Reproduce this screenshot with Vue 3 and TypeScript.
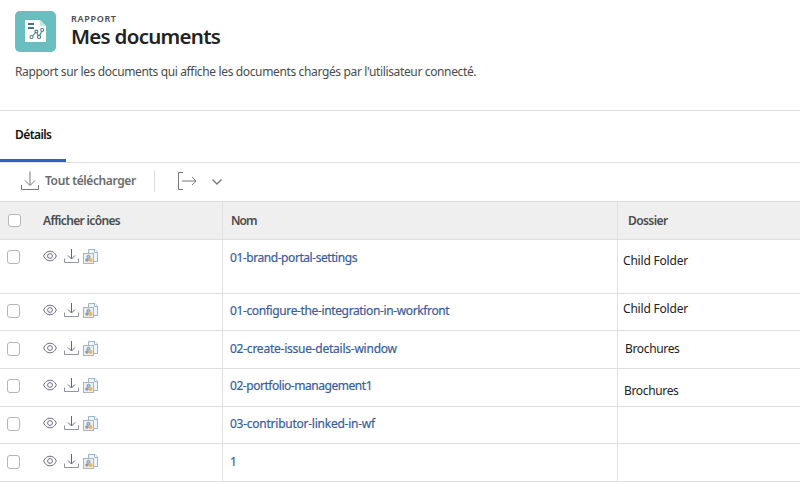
<script setup lang="ts">
interface DocumentRow {
  name: string
  nameY: number
  spacing: number
  folder: string
  folderX: number
  folderY: number
  folderSpacing: number
  height: number
  top: number
}

const rows: DocumentRow[] = [
  { name: '01-brand-portal-settings', nameY: 10, spacing: -0.44, folder: 'Child Folder', folderX: 5, folderY: 13, folderSpacing: -0.2, height: 54, top: 10 },
  { name: '01-configure-the-integration-in-workfront', nameY: 9, spacing: -0.37, folder: 'Child Folder', folderX: 5, folderY: 7, folderSpacing: -0.2, height: 37, top: 10 },
  { name: '02-create-issue-details-window', nameY: 10, spacing: -0.24, folder: 'Brochures', folderX: 7, folderY: 10, folderSpacing: -0.35, height: 38, top: 11 },
  { name: '02-portfolio-management1', nameY: 9, spacing: -0.46, folder: 'Brochures', folderX: 6, folderY: 14, folderSpacing: -0.35, height: 38, top: 10 },
  { name: '03-contributor-linked-in-wf', nameY: 9, spacing: -0.25, folder: '', folderX: 5, folderY: 10, folderSpacing: 0, height: 37, top: 10 },
  { name: '1', nameY: 10, spacing: 0, folder: '', folderX: 5, folderY: 10, folderSpacing: 0, height: 38, top: 11 },
]
</script>

<template>
  <div class="page">
    <header class="head">
      <div class="identity">
        <svg class="logo" width="41" height="41" viewBox="0 0 41 41">
          <rect width="41" height="41" rx="5" fill="#69bfbf" />
          <path d="M10 9H25L31 15V31H10Z" fill="#fff" />
          <path d="M25 9V15H31Z" fill="#c3e5e5" />
          <path d="M13 13H19M13 17H19" stroke="#43777d" stroke-width="2" />
          <g fill="#fff" stroke="#4c8389" stroke-width="1.1">
            <path d="M16.7 26L21.3 20.5L24 26L27 19.5" fill="none" />
            <circle cx="16.5" cy="26" r="1.5" />
            <circle cx="21.3" cy="20.5" r="1.4" />
            <circle cx="24" cy="26" r="1.6" />
            <circle cx="27.2" cy="19" r="1.5" />
          </g>
        </svg>
        <div>
          <div class="kind">RAPPORT</div>
          <h1>Mes documents</h1>
        </div>
      </div>
      <p class="description">Rapport sur les documents qui affiche les documents chargés par l'utilisateur connecté.</p>
    </header>

    <nav class="tabs"><a class="tab">Détails</a></nav>

    <div class="toolbar">
      <svg class="download-all" width="20" height="20" viewBox="0 0 20 20">
        <path d="M10 .5V14M5 9.5L10 14.5L15 9.5M1.5 14V18.5H18.5V14" />
      </svg>
      <span class="download-label">Tout télécharger</span>
      <i class="separator"></i>
      <svg class="export" width="20" height="20" viewBox="0 0 20 20">
        <path d="M6 1.5H1.5V18.5H6M5 10H18.5M15 6L19 10L15 14" />
      </svg>
      <svg class="chevron" width="12" height="8" viewBox="0 0 12 8">
        <path d="M1.5 1.5L6 6L10.5 1.5" />
      </svg>
    </div>

    <main>
      <div class="row header-row">
        <div class="cell actions"><i class="checkbox"></i><b class="icons-title">Afficher icônes</b></div>
        <div class="cell name"><b class="name-title">Nom</b></div>
        <div class="folder"><b class="folder-title">Dossier</b></div>
      </div>
      <div
        v-for="row in rows"
        :key="row.name"
        class="row"
        :style="{ '--height': row.height + 'px', '--top': row.top + 'px' }"
      >
        <div class="cell actions">
          <i class="checkbox"></i>
          <svg class="eye" width="14" height="12" viewBox="0 0 14 12">
            <path d="M.6 6C2.1 2.8 4.2 1.2 7 1.2S11.9 2.8 13.4 6C11.9 9.2 9.8 10.8 7 10.8S2.1 9.2.6 6Z" />
            <circle cx="7" cy="6" r="2.4" />
          </svg>
          <svg class="download" width="16" height="14" viewBox="0 0 16 14">
            <path class="arrow" d="M7.5 0V9.5M4 6.5L7.5 10L11 6.5" />
            <path class="tray" d="M.5 9.5V13.5H14.5V9.5" />
          </svg>
          <svg class="file" width="16" height="15" viewBox="0 0 16 15">
            <path d="M5.5.5H12L14.5 3V12.5H5.5Z" fill="#edf6fa" stroke="#9bb6c8" />
            <path d="M11.5.5V3.5H14.5" fill="#fff" stroke="#9bb6c8" />
            <rect x=".5" y="4.5" width="10" height="10" fill="#eee" stroke="#b4b1ae" />
            <circle cx="5.5" cy="7.8" r="1.5" fill="#a9cdea" stroke="#6f98bd" />
            <circle cx="4" cy="11" r="1.8" fill="#8a9da6" />
            <circle cx="7.5" cy="11" r="2" fill="#efb45e" />
          </svg>
        </div>
        <div class="cell name" :style="{ paddingTop: row.nameY + 'px' }">
          <a class="link" :style="{ letterSpacing: row.spacing + 'px' }">{{ row.name }}</a>
        </div>
        <div
          class="folder"
          :style="{ paddingLeft: row.folderX + 'px', paddingTop: row.folderY + 'px', letterSpacing: row.folderSpacing + 'px' }"
        >{{ row.folder }}</div>
      </div>
    </main>
  </div>
</template>

<style>
body {
  margin: 0;
  background: #fff;
}
</style>

<style scoped>
.page {
  box-sizing: border-box;
  width: 800px;
  height: 482px;
  overflow: hidden;
  color: #4b4b4b;
  font: 12px/16px "Noto Sans", "Open Sans", sans-serif;
}
.page svg {
  display: block;
  flex: none;
}
.head {
  box-sizing: border-box;
  height: 111px;
  padding: 11px 15px 0;
  border-bottom: 1px solid #dedede;
}
.identity {
  display: flex;
  height: 41px;
  gap: 15px;
}
.kind {
  margin-top: 2px;
  font-size: 9px;
  font-weight: 600;
  line-height: 12px;
  letter-spacing: .68px;
}
h1 {
  margin: -1px 0 0;
  color: #222;
  font-size: 20.5px;
  font-weight: 600;
  line-height: 24px;
  letter-spacing: -.72px;
  white-space: nowrap;
}
.description {
  margin: 12px 0 0;
  letter-spacing: -.36px;
  white-space: nowrap;
}
.tabs {
  display: flex;
  box-sizing: border-box;
  height: 52px;
  border-bottom: 1px solid #dedede;
}
.tab {
  box-sizing: border-box;
  width: 66px;
  height: 51px;
  padding: 16px 0 0 15px;
  border-bottom: 3px solid #2b62c9;
  color: #111;
  font-weight: 600;
  letter-spacing: -.58px;
}
.toolbar {
  display: flex;
  box-sizing: border-box;
  height: 38px;
  padding: 0 0 2px 20px;
  align-items: center;
}
.toolbar svg {
  fill: none;
  stroke: #777;
}
.download-label {
  width: 92px;
  margin-left: 5px;
  color: #6b6b6b;
  font-weight: 600;
  letter-spacing: -.38px;
  white-space: nowrap;
}
.separator {
  width: 1px;
  height: 22px;
  margin-left: 17px;
  background: #ddd;
}
.export {
  margin-left: 22px;
}
.toolbar .chevron {
  margin-left: 14px;
  margin-top: 2px;
  stroke-width: 1.4;
}
.row {
  display: grid;
  grid-template-columns: 223px 395px 1fr;
  box-sizing: border-box;
  height: var(--height);
  border-bottom: 1px solid #dedede;
}
.cell {
  border-right: 1px solid #dedede;
}
.actions {
  display: flex;
  align-items: flex-start;
  padding: calc(var(--top) - 1px) 0 0 7px;
}
.name {
  padding-left: 7px;
}
.checkbox {
  box-sizing: border-box;
  width: 13px;
  height: 14px;
  flex: none;
  margin-top: 1px;
  border: 1px solid #b5b5b5;
  border-radius: 3px;
  background: #fff;
}
.eye {
  margin: 1px 0 0 23px;
  fill: none;
  stroke: #6d7080;
}
.download {
  margin-left: 7px;
  fill: none;
}
.arrow {
  stroke: #606575;
}
.tray {
  stroke: #92949d;
}
.file {
  margin-left: 3px;
}
.link {
  color: #375d9f;
  white-space: nowrap;
  -webkit-text-stroke: .2px currentColor;
}
.folder {
  color: #222;
  white-space: nowrap;
}
.header-row {
  height: 39px;
  border-top: 1px solid #dedede;
  background: #efefef;
}
.header-row .cell {
  border-color: #e3e3e3;
}
.header-row b {
  font-weight: 600;
}
.header-row .actions {
  align-items: center;
  padding: 0 0 0 8px;
}
.header-row .checkbox {
  height: 13px;
  margin-top: 0;
}
.header-row .name {
  padding: 11px 0 0 8px;
}
.header-row .folder {
  padding: 11px 0 0 10px;
  color: #4b4b4b;
}
.icons-title {
  margin-left: 22px;
  letter-spacing: -.65px;
}
.name-title {
  letter-spacing: -.9px;
}
.folder-title {
  letter-spacing: -.58px;
}
</style>
